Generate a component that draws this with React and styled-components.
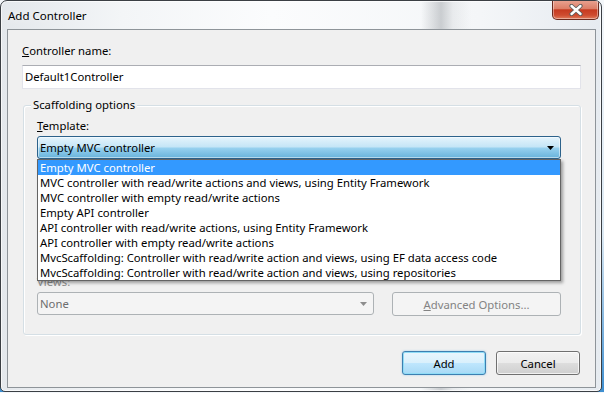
import React from "react";
import styled, { createGlobalStyle } from "styled-components";

const GlobalStyle = createGlobalStyle`
  html, body {
    margin: 0;
    padding: 0;
    background: linear-gradient(180deg, #f4f7fa 0%, #dce9f3 60%, #3d8ed0 100%);
  }
  body {
    font-family: "Noto Sans", "Open Sans", sans-serif;
    font-size: 11.3px;
    color: #000;
  }
`;

const templates = [
  "Empty MVC controller",
  "MVC controller with read/write actions and views, using Entity Framework",
  "MVC controller with empty read/write actions",
  "Empty API controller",
  "API controller with read/write actions, using Entity Framework",
  "API controller with empty read/write actions",
  "MvcScaffolding: Controller with read/write action and views, using EF data access code",
  "MvcScaffolding: Controller with read/write action and views, using repositories",
];

const Window = styled.div`
  width: 602px;
  height: 392px;
  box-sizing: border-box;
  border: 1px solid #3b3f44;
  border-radius: 7px 7px 5px 5px;
  display: flex;
  flex-direction: column;
  overflow: hidden;
  background:
    linear-gradient(90deg, rgba(120, 126, 132, 0) 420px, rgba(120, 126, 132, 0.35) 440px, rgba(120, 126, 132, 0.1) 452px, rgba(120, 126, 132, 0) 470px),
    linear-gradient(90deg, #e4e8ec 0%, #f3f5f7 20%, #fbfcfd 45%, #f4f6f8 80%, #e6ebf0 100%);
  box-shadow: inset 0 0 0 1px rgba(255, 255, 255, 0.7);
`;

const TitleBar = styled.div`
  height: 28px;
  flex: none;
  display: flex;
  align-items: flex-start;
  justify-content: space-between;
  padding-left: 7px;
`;

const Title = styled.span`
  align-self: center;
  font-size: 11.5px;
  color: #000;
  text-shadow: 0 0 8px rgba(255, 255, 255, 0.9);
`;

const CloseButton = styled.div`
  width: 47px;
  height: 20px;
  margin: -1px 2px 0 0;
  box-sizing: border-box;
  border: 1px solid #6b2a1e;
  border-top: none;
  border-radius: 0 0 5px 5px;
  background: linear-gradient(180deg, #eaa493 0%, #dc7f68 45%, #c63a20 52%, #cf4c30 80%, #e07c5c 100%);
  box-shadow: inset 0 0 0 1px rgba(255, 255, 255, 0.4);
  display: flex;
  align-items: center;
  justify-content: center;
`;

const Client = styled.div`
  flex: 1;
  margin: 0 5px 5px 6px;
  box-sizing: border-box;
  border: 1px solid #8e9499;
  background: #f0f0f0;
  padding: 13px 14px 12px 14px;
  display: flex;
  flex-direction: column;
`;

const Label = styled.div`
  line-height: 15px;
  height: 15px;
  color: ${(p) => (p.$disabled ? "#8d8d8d" : "#000")};
`;

const TextBox = styled.div`
  margin-top: 7px;
  height: 24px;
  box-sizing: border-box;
  background: #fff;
  border: 1px solid #e2e3ea;
  border-top-color: #abadb3;
  padding: 0 2px;
  line-height: 22px;
`;

const Group = styled.div`
  margin: 16px 0 0 1px;
  border: 1px solid #d5dfe5;
  border-radius: 3px;
  box-shadow: inset 1px 1px 0 #fff, 1px 1px 0 #fff;
  padding: 0 19px 18px 13px;
  display: flex;
  flex-direction: column;
`;

const Legend = styled.div`
  align-self: flex-start;
  margin: -9px 0 0 -6px;
  padding: 0 2px;
  line-height: 15px;
  background: #f0f0f0;
`;

const Field = styled.div`
  display: flex;
  flex-direction: column;
  gap: 3px;
  margin-top: ${(p) => p.$top}px;
`;

const ComboWrap = styled.div`
  position: relative;
  z-index: ${(p) => (p.$open ? 5 : 1)};
`;

const Combo = styled.div`
  height: 23px;
  flex: none;
  box-sizing: border-box;
  border: 1px solid ${(p) => (p.$disabled ? "#adb2b5" : "#2c628b")};
  border-radius: 3px;
  padding: 0 6px 0 2px;
  display: flex;
  align-items: center;
  justify-content: space-between;
  color: ${(p) => (p.$disabled ? "#6d6d6d" : "#000")};
  background: ${(p) =>
    p.$disabled
      ? "#f4f4f4"
      : "linear-gradient(180deg, #e5f4fc 0%, #c4e5f6 48%, #98d1ef 52%, #68b3db 100%)"};
  box-shadow: ${(p) => (p.$disabled ? "none" : "inset 0 0 0 1px rgba(255,255,255,0.5)")};
  width: ${(p) => (p.$width ? `${p.$width}px` : "auto")};
`;

const DropList = styled.div`
  position: absolute;
  top: 100%;
  left: 0;
  width: 524px;
  box-sizing: border-box;
  border: 1px solid #646464;
  background: #fff;
  box-shadow: 2px 2px 3px rgba(0, 0, 0, 0.35);
`;

const Item = styled.div`
  height: 15px;
  line-height: 15px;
  padding-left: 2px;
  white-space: nowrap;
  background: ${(p) => (p.$selected ? "#3399ff" : "transparent")};
  color: ${(p) => (p.$selected ? "#fff" : "#000")};
`;

const Row = styled.div`
  display: flex;
  gap: 18px;
`;

const Button = styled.div`
  height: 24px;
  box-sizing: border-box;
  border-radius: 3px;
  display: flex;
  align-items: center;
  justify-content: center;
  border: 1px solid ${(p) => (p.$default ? "#3c7fb1" : p.$disabled ? "#adb2b5" : "#707070")};
  color: ${(p) => (p.$disabled ? "#838383" : "#000")};
  background: ${(p) =>
    p.$disabled
      ? "#f4f4f4"
      : p.$default
      ? "linear-gradient(180deg, #eaf6fd 0%, #d9f0fc 48%, #bee6fd 52%, #a7d9f5 100%)"
      : "linear-gradient(180deg, #f2f2f2 0%, #ebebeb 48%, #dddddd 52%, #cfcfcf 100%)"};
  box-shadow: ${(p) =>
    p.$default
      ? "inset 0 0 0 1px #8fdcf6, 0 0 2px rgba(60,160,220,0.5)"
      : p.$disabled
      ? "none"
      : "inset 0 0 0 1px rgba(255,255,255,0.7)"};
  width: ${(p) => (p.$width ? `${p.$width}px` : "auto")};
  flex: ${(p) => (p.$width ? "none" : "1")};
`;

const ButtonBar = styled.div`
  margin-top: 16px;
  display: flex;
  justify-content: flex-end;
  gap: 10px;
  padding-right: 1px;
`;

const Arrow = ({ color }) => (
  <svg width="7" height="4" viewBox="0 0 7 4">
    <path d="M0 0h7L3.5 4z" fill={color} />
  </svg>
);

export default function App() {
  return (
    <>
      <GlobalStyle />
      <Window>
        <TitleBar>
          <Title>Add Controller</Title>
          <CloseButton>
            <svg width="14" height="12" viewBox="0 0 14 12">
              <path d="M2.5 2l9 8M11.5 2l-9 8" stroke="#5c5c5c" strokeWidth="4.2" strokeLinecap="round" />
              <path d="M2.5 2l9 8M11.5 2l-9 8" stroke="#ffffff" strokeWidth="2.4" strokeLinecap="round" />
            </svg>
          </CloseButton>
        </TitleBar>
        <Client>
          <Label>
            <u>C</u>ontroller name:
          </Label>
          <TextBox>Default1Controller</TextBox>
          <Group>
            <Legend>Scaffolding options</Legend>
            <Field $top={6}>
              <Label>
                <u>T</u>emplate:
              </Label>
              <ComboWrap $open>
                <Combo>
                  <span>Empty MVC controller</span>
                  <Arrow color="#000" />
                </Combo>
                <DropList>
                  {templates.map((t, i) => (
                    <Item key={t} $selected={i === 0}>
                      {t}
                    </Item>
                  ))}
                </DropList>
              </ComboWrap>
            </Field>
            <Field $top={11}>
              <Label $disabled>Model class:</Label>
              <Combo $disabled />
            </Field>
            <Field $top={11}>
              <Label $disabled>Data context class:</Label>
              <Combo $disabled />
            </Field>
            <Field $top={11}>
              <Label $disabled>Views:</Label>
              <Row>
                <Combo $disabled $width={337}>
                  <span>None</span>
                  <Arrow color="#8d8d8d" />
                </Combo>
                <Button $disabled>
                  <span>
                    <u>A</u>dvanced Options...
                  </span>
                </Button>
              </Row>
            </Field>
          </Group>
          <ButtonBar>
            <Button $default $width={84}>
              Add
            </Button>
            <Button $width={84}>Cancel</Button>
          </ButtonBar>
        </Client>
      </Window>
    </>
  );
}
